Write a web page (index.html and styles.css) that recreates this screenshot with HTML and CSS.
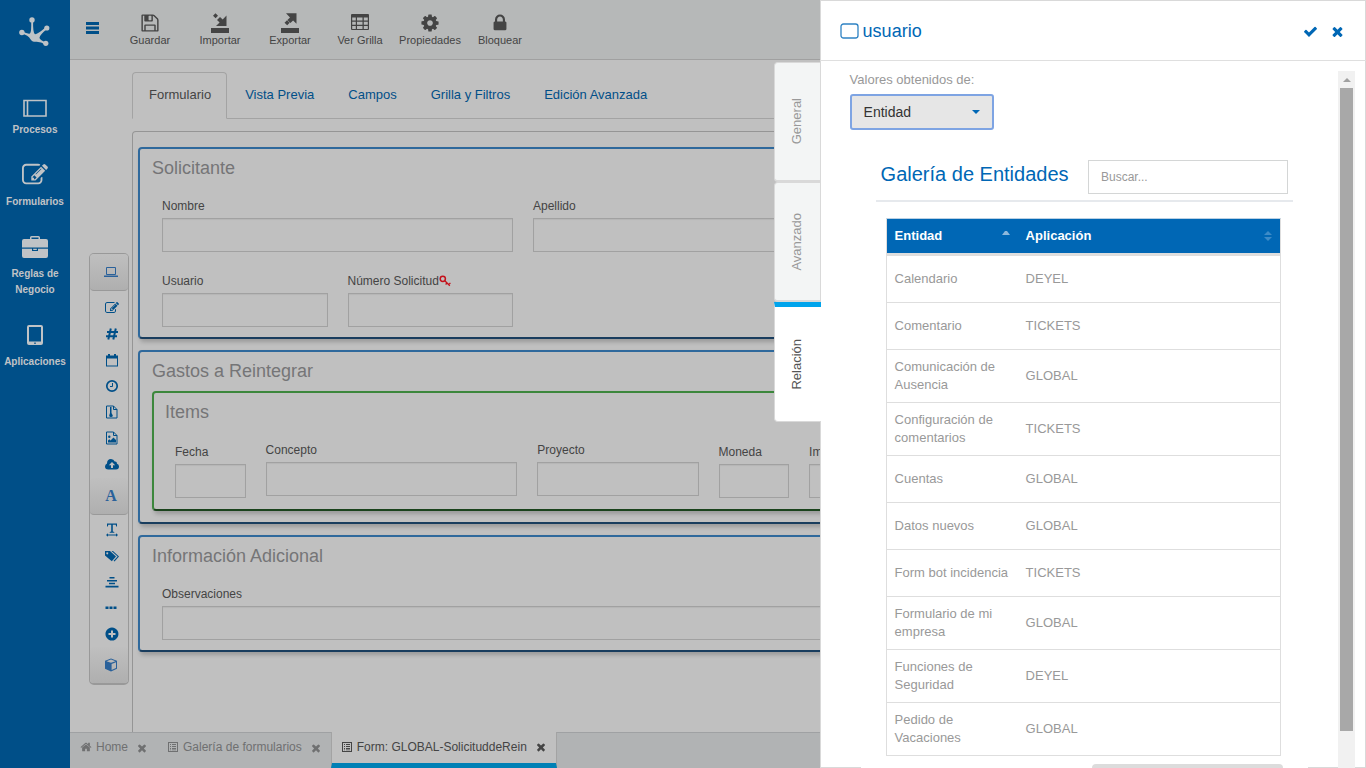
FILE: index.html
```html
<!DOCTYPE html>
<html lang="es">
<head>
<meta charset="utf-8">
<title>Form: GLOBAL-SolicituddeRein</title>
<link rel="stylesheet" href="styles.css">
</head>
<body>
<svg class="sprite" aria-hidden="true">
  <symbol id="i-edit" viewBox="0 0 1792 1792"><path d="M888 1184l116-116-152-152-116 116v56h96v96h56zm440-720q-16-16-33 1l-350 350q-17 17-1 33t33-1l350-350q17-17 1-33zm80 594v190q0 119-84.5 203.5t-203.5 84.5h-832q-119 0-203.5-84.5t-84.5-203.5v-832q0-119 84.5-203.5t203.5-84.5h832q63 0 117 25 15 7 18 23 3 17-9 29l-49 49q-14 14-32 8-23-6-45-6h-832q-66 0-113 47t-47 113v832q0 66 47 113t113 47h832q66 0 113-47t47-113v-126q0-13 9-22l64-64q15-15 35-7t20 29zm-96-738l288 288-672 672h-288v-288zm444 132l-92 92-288-288 92-92q28-28 68-28t68 28l152 152q28 28 28 68t-28 68z"/></symbol>
  <symbol id="i-save" viewBox="0 0 1792 1792"><path d="M512 1536h768v-384h-768v384zm896 0h128v-896q0-14-10-38.5t-20-34.5l-281-281q-10-10-34-20t-39-10v416q0 40-28 68t-68 28h-576q-40 0-68-28t-28-68v-416h-128v1280h128v-416q0-40 28-68t68-28h832q40 0 68 28t28 68v416zm-384-928v-320q0-13-9.5-22.5t-22.5-9.5h-192q-13 0-22.5 9.5t-9.5 22.5v320q0 13 9.5 22.5t22.5 9.5h192q13 0 22.5-9.5t9.5-22.5zm640 32v928q0 40-28 68t-68 28h-1344q-40 0-68-28t-28-68v-1344q0-40 28-68t68-28h928q40 0 88 20t76 48l280 280q28 28 48 76t20 88z"/></symbol>
  <symbol id="i-cog" viewBox="0 0 1792 1792"><path d="M1152 896q0-106-75-181t-181-75-181 75-75 181 75 181 181 75 181-75 75-181zm512-109v222q0 12-8 23t-20 13l-185 28q-19 54-39 91 35 50 107 138 10 12 10 25t-9 23q-27 37-99 108t-94 71q-12 0-26-9l-138-108q-44 23-91 38-16 136-29 186-7 28-36 28h-222q-14 0-24.5-8.5t-11.5-21.5l-28-184q-49-16-90-37l-141 107q-10 9-25 9-14 0-25-11-126-114-165-168-7-10-7-23 0-12 8-23 15-21 51-66.5t54-70.5q-27-50-41-99l-183-27q-13-2-21-12.5t-8-23.5v-222q0-12 8-23t19-13l186-28q14-46 39-92-40-57-107-138-10-12-10-24 0-10 9-23 26-36 98.5-107.5t94.5-71.5q13 0 26 10l138 107q44-23 91-38 16-136 29-186 7-28 36-28h222q14 0 24.5 8.500t11.5 21.500l28 184q49 16 90 37l142-107q9-9 24-9 13 0 25 10 129 119 165 170 7 8 7 22 0 12-8 23-15 21-51 66.500t-54 70.500q26 50 41 98l183 28q13 2 21 12.500t8 23.500z"/></symbol>
  <symbol id="i-lock" viewBox="0 0 1792 1792"><path d="M640 768h512v-192q0-106-75-181t-181-75-181 75-75 181v192zm832 96v576q0 40-28 68t-68 28h-960q-40 0-68-28t-28-68v-576q0-40 28-68t68-28h32v-192q0-184 132-316t316-132 316 132 132 316v192h32q40 0 68 28t28 68z"/></symbol>
  <symbol id="i-times" viewBox="0 0 1792 1792"><path d="M1490 1322q0 40-28 68l-136 136q-28 28-68 28t-68-28l-294-294-294 294q-28 28-68 28t-68-28l-136-136q-28-28-28-68t28-68l294-294-294-294q-28-28-28-68t28-68l136-136q28-28 68-28t68 28l294 294 294-294q28-28 68-28t68 28l136 136q28 28 28 68t-28 68l-294 294 294 294q28 28 28 68z"/></symbol>
  <symbol id="i-check" viewBox="0 0 1792 1792"><path d="M1671 566q0 40-28 68l-724 724-136 136q-28 28-68 28t-68-28l-136-136-362-362q-28-28-28-68t28-68l136-136q28-28 68-28t68 28l294 295 656-657q28-28 68-28t68 28l136 136q28 28 28 68z"/></symbol>
  <symbol id="i-home" viewBox="0 0 1792 1792"><path d="M1472 992v480q0 26-19 45t-45 19h-384v-384h-256v384h-384q-26 0-45-19t-19-45v-480q0-1 .5-3t.5-3l575-474 575 474q1 2 1 6zm223-69l-62 74q-8 9-21 11h-3q-13 0-21-7l-692-577-692 577q-12 8-24 7-13-2-21-11l-62-74q-8-10-7-23.5t11-21.5l719-599q32-26 76-26t76 26l244 204v-195q0-14 9-23t23-9h192q14 0 23 9t9 23v408l219 182q10 8 11 21.5t-7 23.5z"/></symbol>
  <symbol id="i-list" viewBox="0 0 12 12"><path fill-rule="evenodd" d="M1 1h10v10H1zM2 2v8h8V2zM3 3h1v1H3zM5 3h4v1H5zM3 5h1v1H3zM5 5h4v1H5zM3 7h1v1H3zM5 7h4v1H5zM3 8.500h1v.8H3zM5 8.500h4v.8H5z"/></symbol>
</svg>

<div class="app">
  <nav class="side">
    <svg class="logo" viewBox="0 0 32 30"><g fill="#bfc3c6"><circle cx="13" cy="2.900" r="2.700"/><circle cx="2.900" cy="15.500" r="2.700"/><circle cx="27.800" cy="11" r="2.600"/><circle cx="26.800" cy="26.300" r="2.600"/><path d="M12.200 4h1.900Q13.800 16 16 17.300 18.500 17.500 27 10l1.400 1.500Q20.800 18 20.500 20.500q-.2 2.300 6.700 5L26.200 27.500Q22 24.600 17 24.800q-4 .2-5.700-2.900Q9.500 18.500 2.500 16.500l.5-2Q9 17.200 11 16.500 12.500 15.500 12.200 4z"/></g></svg>
    <a class="side-item side-item-first" href="#"><svg class="side-icon" viewBox="0 0 26 22"><path fill="none" stroke="currentColor" stroke-width="1.600" d="M2 3.500h22v15.500H2zM5.500 3.500V19"/></svg>Procesos</a>
    <a class="side-item" href="#"><svg class="side-icon side-icon-lg"><use href="#i-edit"/></svg>Formularios</a>
    <a class="side-item" href="#"><svg class="side-icon" viewBox="0 0 26 22"><path fill="currentColor" d="M8 3V1.500Q8 0 9.500 0h7Q18 0 18 1.500V3h6q2 0 2 2v6.500H0V5q0-2 2-2zM9.500 3h7V1.500h-7zM0 12.700h10V15h6v-2.300h10V20q0 2-2 2H2q-2 0-2-2zM11.200 12.700h3.600v1.300h-3.600z" fill-rule="evenodd"/></svg>Reglas de Negocio</a>
    <a class="side-item" href="#"><svg class="side-icon" viewBox="0 0 26 22"><path fill="currentColor" fill-rule="evenodd" d="M7 1h12q2 0 2 2v16q0 2-2 2H7q-2 0-2-2V3q0-2 2-2zM7 3v14.500h12V3zM12.300 18.500h1.400v1.400h-1.400z"/></svg>Aplicaciones</a>
  </nav>

  <div class="work">
    <header class="toolbar">
      <button class="menu" aria-label="Menú"><svg width="14" height="14" viewBox="0 0 14 14"><path fill="currentColor" d="M0 1h13v3H0zM0 5.500h13v3H0zM0 10h13v3H0z"/></svg></button>
      <button class="tool"><svg class="tool-icon"><use href="#i-save"/></svg>Guardar</button>
      <button class="tool"><svg class="tool-icon" viewBox="0 0 20 20"><path d="M1 15h18v5H1zM16.500 2.500V13H6l3.600-3.500-2.600-2.600 3-3 2.700 2.600zM3 2.700L5.500.3 8 2.800 5.600 5.200z"/></svg>Importar</button>
      <button class="tool"><svg class="tool-icon" viewBox="0 0 20 20"><path d="M1 15h18v5H1zM16.500.3v10.500l-3.400-3.400-2.700 2.700-3-3L10 4.400 6 .3zM4.500 9.700L7 7.300l2.700 2.500-2.500 2.500z"/></svg>Exportar</button>
      <button class="tool"><svg class="tool-icon" viewBox="0 0 20 20"><path fill-rule="evenodd" d="M2 1h16q1 0 1 1v14q0 1-1 1H2q-1 0-1-1V2q0-1 1-1zM2.200 4.500v3h3.600v-3zM7 4.500v3h5.500v-3zM13.800 4.500v3h4v-3zM2.200 8.700v3h3.600v-3zM7 8.700v3h5.500v-3zM13.800 8.700v3h4v-3zM2.200 12.900v3h3.600v-3zM7 12.900v3h5.500v-3zM13.800 12.900v3h4v-3z"/></svg>Ver Grilla</button>
      <button class="tool"><svg class="tool-icon"><use href="#i-cog"/></svg>Propiedades</button>
      <button class="tool"><svg class="tool-icon"><use href="#i-lock"/></svg>Bloquear</button>
    </header>

    <main class="editor">
      <nav class="tabs">
        <a class="tab tab-on" href="#">Formulario</a>
        <a class="tab" href="#">Vista Previa</a>
        <a class="tab" href="#">Campos</a>
        <a class="tab" href="#">Grilla y Filtros</a>
        <a class="tab" href="#">Edición Avanzada</a>
      </nav>
      <div class="stage">
        <aside class="palette">
          <button class="group" aria-label="Controles"><svg class="glyph" viewBox="0 0 14 14"><path fill="none" stroke="currentColor" d="M2.500 2.500h9v7h-9z"/><path d="M0 10.500h14v1.500H0z"/></svg></button>
          <div class="items">
            <button class="item" aria-label="Texto"><svg class="glyph"><use href="#i-edit"/></svg></button>
            <button class="item" aria-label="Número"><svg class="glyph" viewBox="0 0 14 14"><path fill="none" stroke="currentColor" stroke-width="2" d="M5.800 1.500l-2.500 11M10.800 1.500l-2.500 11M2 5h11M1 9.300h11"/></svg></button>
            <button class="item" aria-label="Fecha"><svg class="glyph" viewBox="0 0 14 14"><path fill-rule="evenodd" d="M1 2.500h2V1h2v1.500h4V1h2v1.500h2V13.500H1zM2 5.500v7h10v-7z"/></svg></button>
            <button class="item" aria-label="Hora"><svg class="glyph" viewBox="0 0 14 14"><circle cx="7" cy="7" r="5.200" fill="none" stroke="currentColor" stroke-width="1.700"/><path fill="none" stroke="currentColor" d="M7.500 4v3.500H5"/></svg></button>
            <button class="item" aria-label="Archivo"><svg class="glyph" viewBox="0 0 14 14"><path fill="none" stroke="currentColor" d="M1.500 1h7l3.500 3.500v8.500H1.500zM8.500 1v3.500H12"/><path d="M5 2h1.500v6l1.300 2.500q0 1.500-1.800 1.500t-1.800-1.500L5 8z"/></svg></button>
            <button class="item" aria-label="Imagen"><svg class="glyph" viewBox="0 0 14 14"><path fill="none" stroke="currentColor" d="M1.500 1h7l3.500 3.500v8.500H1.500zM8.500 1v3.500H12"/><circle cx="4.300" cy="5.800" r="1.200"/><path d="M3 11.500v-2l1.300-1.200L5.500 9.500l3-3 2.500 2.500v2.500z"/></svg></button>
            <button class="item" aria-label="Subir"><svg class="glyph" viewBox="0 0 14 14"><path fill-rule="evenodd" d="M3.300 12.500Q0 12.300 0 9.500 0 7.300 2 6.500 2 2 6 2q2.800 0 3.700 2.500 2.300-.3 2.300 2.200 2 .6 2 2.800 0 3-3 3zM7 5L3.800 8.300H6V11h2V8.300h2.200z"/></svg></button>
          </div>
          <button class="group" aria-label="Texto fijo"><span class="letter">A</span></button>
          <div class="items items-tight">
            <button class="item" aria-label="Título"><svg class="glyph" viewBox="0 0 14 14"><path d="M2 .5h10v3h-.8L10.700 1.700H7.800v6.800l1.500.5v.7H4.700V9l1.500-.5V1.700H3.300L2.800 3.500H2zM1 12l2-1.700v1.200h8v-1.200L13 12l-2 1.700v-1.200H3v1.200z"/></svg></button>
            <button class="item" aria-label="Etiquetas"><svg class="glyph" viewBox="0 0 14 14"><path fill-rule="evenodd" d="M0 2h5l6 5.500L6.800 12.300 0 6.500zM2.200 3.200a1 1 0 1 0 .1 0z"/><path d="M6.500 2H8l6 5.500-4.500 5-.9-.8 4-4.200z"/></svg></button>
            <button class="item" aria-label="Alinear"><svg class="glyph" viewBox="0 0 14 14"><path d="M4.500 2h5v1.500h-5zM2 5h10v1.500H2zM4 7.800h6v1.500H4zM.5 10.700h13v1.700H.5z"/></svg></button>
            <button class="item" aria-label="Más"><svg class="glyph" viewBox="0 0 14 14"><path d="M.5 5.500h3v2.500h-3zM4.500 5.500h3v2.500h-3zM8.500 5.500h3v2.500h-3z"/></svg></button>
            <button class="item" aria-label="Agregar"><svg class="glyph" viewBox="0 0 14 14"><path fill-rule="evenodd" d="M7 .5a6.500 6.500 0 1 1-.1 0zM6 3.500V6H3.500v2H6v2.500h2V8h2.500V6H8V3.500z"/></svg></button>
          </div>
          <button class="group group-last" aria-label="Contenedor"><svg class="glyph" viewBox="0 0 14 14"><path fill-rule="evenodd" d="M7 .5l6 2.200v8L7 13.500 1 10.700v-8zM2.500 3.200L7 4.800l4.500-1.600L7 1.600zM7.600 5.900v6L12 9.900V4.300z"/></svg></button>
        </aside>

        <form class="canvas">
          <section class="box">
            <h2 class="box-title">Solicitante</h2>
            <div class="grid">
              <div class="field span-4"><label for="nombre">Nombre</label><input id="nombre" type="text"></div>
              <div class="field span-4"><label for="apellido">Apellido</label><input id="apellido" type="text"></div>
              <div class="field span-2 first"><label for="usuario">Usuario</label><input id="usuario" type="text"></div>
              <div class="field span-2"><label for="numero">Número Solicitud<svg class="key" viewBox="0 0 12 12"><path fill="none" stroke="#c4111b" stroke-width="1.300" d="M5.800 5.800l5 5M8 8l-1.400 1.500M9.800 9.600l1.600-1.700"/><circle cx="3.800" cy="3.800" r="2.600" fill="none" stroke="#c4111b" stroke-width="1.500"/></svg></label><input id="numero" type="text"></div>
            </div>
          </section>
          <section class="box box-nest">
            <h2 class="box-title">Gastos a Reintegrar</h2>
            <section class="box box-green">
              <h3 class="box-title">Items</h3>
              <div class="grid">
                <div class="field low"><label for="fecha">Fecha</label><input id="fecha" type="text"></div>
                <div class="field span-3"><label for="concepto">Concepto</label><input id="concepto" type="text"></div>
                <div class="field span-2"><label for="proyecto">Proyecto</label><input id="proyecto" type="text"></div>
                <div class="field low"><label for="moneda">Moneda</label><input id="moneda" type="text"></div>
                <div class="field low"><label for="importe">Importe</label><input id="importe" type="text"></div>
              </div>
            </section>
          </section>
          <section class="box">
            <h2 class="box-title">Información Adicional</h2>
            <div class="grid">
              <div class="field span-12"><label for="obs">Observaciones</label><input id="obs" type="text"></div>
            </div>
          </section>
        </form>
      </div>
    </main>

    <footer class="taskbar">
      <div class="task"><svg class="task-icon"><use href="#i-home"/></svg>Home<button class="close" aria-label="Cerrar Home"><svg><use href="#i-times"/></svg></button></div>
      <div class="task"><svg class="task-icon"><use href="#i-list"/></svg>Galería de formularios<button class="close" aria-label="Cerrar Galería"><svg><use href="#i-times"/></svg></button></div>
      <div class="task task-on"><svg class="task-icon"><use href="#i-list"/></svg>Form: GLOBAL-SolicituddeRein<button class="close" aria-label="Cerrar Form"><svg><use href="#i-times"/></svg></button></div>
    </footer>
  </div>
</div>

<aside class="drawer">
  <div class="drawer-tabs">
    <button class="dtab"><span>General</span></button>
    <button class="dtab"><span>Avanzado</span></button>
    <button class="dtab dtab-on"><span>Relación</span></button>
  </div>
  <header class="drawer-head">
    <svg width="19" height="16" viewBox="0 0 19 16"><rect x="1" y="1" width="17" height="14" rx="2.500" fill="none" stroke="#2f83c4" stroke-width="1.300"/></svg>
    <h1>usuario</h1>
    <button class="act" aria-label="Aceptar"><svg><use href="#i-check"/></svg></button>
    <button class="act" aria-label="Cancelar"><svg><use href="#i-times"/></svg></button>
  </header>
  <div class="drawer-body">
    <div class="content">
      <label class="source-label" for="source">Valores obtenidos de:</label>
      <div class="select-wrap">
        <select id="source"><option>Entidad</option></select>
        <svg class="caret" width="8" height="4" viewBox="0 0 8 4"><path fill="#0067b5" d="M0 0h8L4 4z"/></svg>
      </div>
      <section class="gallery">
        <div class="gallery-head">
          <h2>Galería de Entidades</h2>
          <input type="search" placeholder="Buscar..." aria-label="Buscar">
        </div>
        <table class="entities">
          <thead><tr>
            <th class="col-name"><div class="th">Entidad<svg width="8" height="12" viewBox="0 0 8 12"><path fill="#8db8dc" d="M0 5l3-4h2l3 4z"/></svg></div></th>
            <th><div class="th">Aplicación<svg width="8" height="12" viewBox="0 0 8 12"><path fill="#3d8bc8" d="M0 5l4-4 4 4zM0 7h8l-4 4z"/></svg></div></th>
          </tr></thead>
          <tbody>
            <tr><td>Calendario</td><td>DEYEL</td></tr>
            <tr><td>Comentario</td><td>TICKETS</td></tr>
            <tr><td>Comunicación de Ausencia</td><td>GLOBAL</td></tr>
            <tr><td>Configuración de comentarios</td><td>TICKETS</td></tr>
            <tr><td>Cuentas</td><td>GLOBAL</td></tr>
            <tr><td>Datos nuevos</td><td>GLOBAL</td></tr>
            <tr><td>Form bot incidencia</td><td>TICKETS</td></tr>
            <tr><td>Formulario de mi empresa</td><td>GLOBAL</td></tr>
            <tr><td>Funciones de Seguridad</td><td>DEYEL</td></tr>
            <tr><td>Pedido de Vacaciones</td><td>GLOBAL</td></tr>
          </tbody>
        </table>
        <div class="pager"></div>
      </section>
    </div>
    <div class="scroll" aria-hidden="true">
      <svg width="16" height="17" viewBox="0 0 16 17"><path fill="#a0a0a0" d="M4 11l4-4 4 4z"/></svg>
      <div class="thumb"></div>
    </div>
  </div>
</aside>
</body>
</html>
```
FILE: styles.css
```css
* { box-sizing: border-box; }

body {
  margin: 0;
  height: 100vh;
  overflow: hidden;
  position: relative;
  font-family: "Liberation Sans", Arial, sans-serif;
  font-size: 12px;
  color: #444;
  background: #c0c0c0;
}

button, input, select { font: inherit; color: inherit; }
button { background: none; border: 0; padding: 0; }
h1, h2, h3 { margin: 0; font-weight: normal; }
a { text-decoration: none; }
svg { fill: currentColor; flex: none; }
.sprite { display: none; }

.app { display: flex; height: 100%; }

/* Side navigation */
.side {
  width: 70px;
  flex: none;
  background: #004f88;
  display: flex;
  flex-direction: column;
  align-items: center;
  padding-top: 17px;
}
.logo { width: 32px; height: 30px; margin-bottom: 50px; }
.side-item {
  display: flex;
  flex-direction: column;
  align-items: center;
  gap: 8px;
  margin-bottom: 26px;
  color: #c0c3c6;
  font-size: 10px;
  font-weight: bold;
  line-height: 16px;
  text-align: center;
}
.side-item-first { gap: 3px; }
.side-icon { width: 26px; height: 22px; }
.side-icon-lg { width: 28px; height: 26px; margin: -2px 0; }

/* Toolbar */
.work { flex: 1; min-width: 0; display: flex; flex-direction: column; }
.toolbar {
  display: flex;
  flex: none;
  height: 60px;
  background: #b6b8b8;
  border-bottom: 1px solid #a0a0a0;
}
.menu { width: 45px; color: #004f88; }
.tool {
  width: 70px;
  display: flex;
  flex-direction: column;
  align-items: center;
  padding-top: 13px;
  font-size: 11px;
  line-height: 14px;
}
.tool-icon { width: 20px; height: 20px; }

/* Editor */
.editor {
  flex: 1;
  min-height: 0;
  overflow: hidden;
  display: flex;
  flex-direction: column;
  padding: 12px 81px 0 19px;
}
.tabs {
  display: flex;
  gap: 2px;
  margin-left: 43px;
  border-bottom: 1px solid #a3a3a3;
}
.tab {
  padding: 14px 15px 15px;
  margin-bottom: -1px;
  border: 1px solid transparent;
  border-radius: 4px 4px 0 0;
  font-size: 13px;
  line-height: 16px;
  color: #004f88;
}
.tab-on {
  padding-left: 16px;
  color: #444;
  background: #c0c0c0;
  border-color: #a3a3a3 #a3a3a3 #c0c0c0;
}
.stage { flex: 1; display: flex; gap: 3px; padding-top: 12px; }

/* Control palette */
.palette {
  width: 40px;
  flex: none;
  align-self: flex-start;
  margin-top: 122px;
  display: flex;
  flex-direction: column;
  border: 1px solid #999;
  border-bottom-width: 2px;
  border-radius: 5px;
  color: #004f88;
}
.group {
  height: 37px;
  display: flex;
  align-items: center;
  justify-content: center;
  padding-left: 4px;
  color: #2a619a;
  background: linear-gradient(#bfbfbf, #afafaf);
  border-bottom: 1px solid #999;
  border-radius: 4px;
}
.group-last { height: 36px; border-bottom: 0; }
.letter { font: bold 16px "Liberation Serif", serif; }
.items { display: flex; flex-direction: column; padding: 4px 0 1px; }
.items-tight { padding: 2px 0 0; }
.item {
  height: 26px;
  display: flex;
  align-items: center;
  justify-content: center;
  padding-left: 6px;
}
.glyph { width: 14px; height: 14px; }

/* Form canvas */
.canvas {
  flex: 1;
  min-width: 0;
  display: flex;
  flex-direction: column;
  gap: 11px;
  padding: 15px 5px 0;
  border: 1px solid #959595;
  border-bottom: 0;
  border-radius: 4px 4px 0 0;
}
.box {
  padding: 7px 12px 10px;
  border: 2px solid #2f699c;
  border-bottom-color: #193d5e;
  border-radius: 4px;
  box-shadow: 2px 3px 4px rgba(0, 0, 0, .2);
}
.box-nest { padding-bottom: 11px; }
.box-green {
  margin-top: 8px;
  padding: 7px 11px 11px;
  border-color: #3c873c;
  border-bottom-color: #1b431d;
}
.box-title { font-size: 18px; line-height: 24px; color: #757577; }
.grid {
  display: grid;
  grid-template-columns: repeat(12, minmax(0, 1fr));
  gap: 21px 20px;
  padding: 18px 10px 0;
}
.field { display: flex; flex-direction: column; gap: 4px; }
.field label { display: flex; align-items: center; line-height: 16px; white-space: nowrap; }
.field input {
  width: 100%;
  height: 34px;
  border: 1px solid #a1a1a1;
  background: transparent;
  box-shadow: inset 0 1px 1px rgba(0, 0, 0, .06);
}
.span-2 { grid-column: span 2; }
.span-3 { grid-column: span 3; }
.span-4 { grid-column: span 4; }
.span-12 { grid-column: span 12; }
.first { grid-column: 1 / span 2; }
.low { padding-top: 2px; }
.key { width: 12px; height: 12px; }

/* Open documents */
.taskbar {
  flex: none;
  height: 36px;
  display: flex;
  background: #b1b3b4;
  border-top: 1px solid #9fa1a3;
}
.task {
  display: flex;
  align-items: center;
  gap: 4px;
  padding: 0 9px 7px 10px;
  color: #6f7071;
}
.task-icon { width: 12px; height: 12px; }
.close { display: flex; margin-left: 4px; padding-top: 1px; }
.close svg { width: 12px; height: 12px; }
.task-on {
  margin-top: -1px;
  padding: 0 9px 2px;
  color: #444;
  background: #c0c0c0;
  border: 1px solid #a3a3a3;
  border-width: 0 1px;
  border-bottom: 5px solid #0080b5;
}

/* Properties drawer */
.drawer {
  position: absolute;
  top: 0;
  right: 0;
  bottom: 0;
  width: 40%;
  display: flex;
  flex-direction: column;
  background: #fff;
  box-shadow: inset 0 0 0 1px #d9d9d9;
  color: #999;
}
.drawer-tabs {
  position: absolute;
  top: 62px;
  right: 100%;
  margin-right: -1px;
  display: flex;
  flex-direction: column;
}
.dtab {
  width: 47px;
  height: 120px;
  display: flex;
  align-items: center;
  justify-content: center;
  padding-right: 2px;
  font-size: 13px;
  background: #f3f5f5;
  border: 1px solid #d9d9d9;
  border-bottom-width: 2px;
  border-radius: 4px 0 0 4px;
}
.dtab span { writing-mode: vertical-rl; transform: rotate(180deg); }
.dtab-on {
  color: #555;
  background: #fff;
  border-top: 5px solid #00a4ec;
  border-right: 0;
  border-bottom-width: 1px;
  border-radius: 0 0 0 4px;
}
.drawer-head {
  flex: none;
  height: 61px;
  display: flex;
  align-items: center;
  gap: 4px;
  padding: 2px 21px 0 20px;
  border-bottom: 1px solid #dfdfdf;
  color: #0067b5;
}
.drawer-head h1 { flex: 1; font-size: 18px; line-height: 22px; }
.act { display: flex; margin-left: 8px; }
.act svg { width: 15px; height: 15px; }
.drawer-body {
  flex: 1;
  min-height: 0;
  display: flex;
  overflow: hidden;
  padding: 10px 11px 0 30px;
}
.content { flex: 1; min-width: 0; }
.source-label { display: block; font-size: 13px; line-height: 18px; margin-bottom: 5px; }
.select-wrap { position: relative; width: 144px; }
.select-wrap select {
  display: block;
  width: 100%;
  height: 36px;
  appearance: none;
  padding: 0 12px;
  font-size: 14px;
  color: #333;
  background: #e6e6e6;
  border: 2px solid #7ea4e3;
  border-radius: 3px;
}
.caret { position: absolute; right: 14px; top: 16px; }
.gallery {
  margin: 20px 30px 0 11px;
  padding: 0 15px;
  background: #fff;
}
.gallery-head {
  display: flex;
  align-items: center;
  justify-content: space-between;
  gap: 16px;
  padding: 10px 5px 6px;
  border-bottom: 2px solid #e6e9ed;
}
.gallery-head h2 { font-size: 20px; line-height: 24px; color: #0067b5; padding-bottom: 6px; white-space: nowrap; }
.gallery-head input {
  width: 200px;
  height: 34px;
  padding: 0 12px;
  border: 1px solid #d4d6d6;
  background: #fff;
}
.gallery-head input::placeholder { color: #999; }
.entities {
  width: calc(100% - 22px);
  margin: 16px 12px 8px 10px;
  table-layout: fixed;
  border-collapse: separate;
  border-spacing: 0;
  border: 1px solid #dedede;
  border-top-color: #b9d0e4;
  border-bottom: 0;
  font-size: 13px;
  line-height: 18px;
}
.entities th {
  height: 37px;
  padding: 0 8px;
  color: #fff;
  text-align: left;
  background: #0067b5;
  border-bottom: 3px solid #dedede;
}
.th { display: flex; align-items: center; justify-content: space-between; }
.col-name { width: 131px; }
.entities td {
  height: 47px;
  padding: 8px 14px 8px 8px;
  border-bottom: 1px solid #dedede;
}
.entities td:first-child { padding: 8px 7px 8px 8px; }
.pager { width: 191px; height: 34px; margin: 0 10px 0 auto; background: #dcdcdc; border-radius: 4px; }
.scroll { width: 17px; flex: none; display: flex; flex-direction: column; align-items: center; background: #f1f1f1; }
.thumb { width: 13px; height: 643px; flex: none; background: #a8a8a8; }
```
